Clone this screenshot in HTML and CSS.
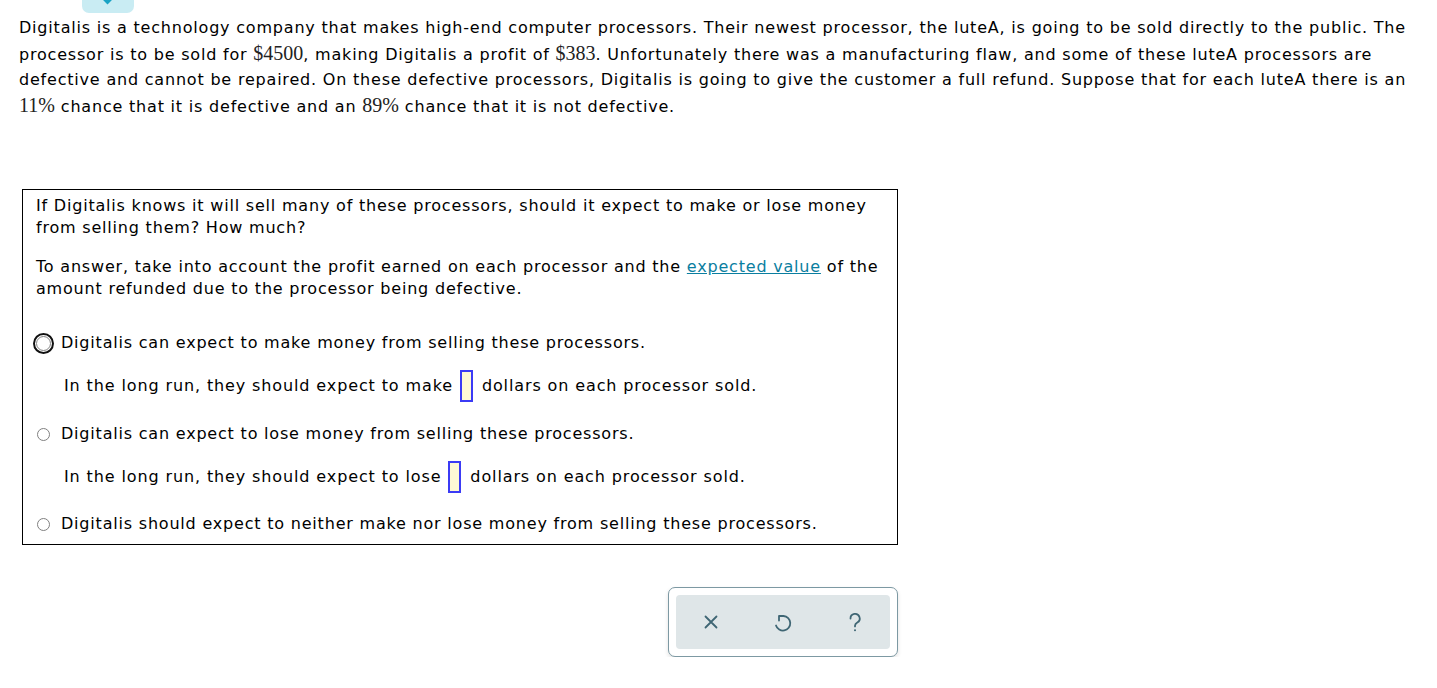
FILE: index.html
```html
<!DOCTYPE html>
<html>
<head>
<meta charset="utf-8">
<link rel="stylesheet" href="styles.css">
</head>
<body>
<div class="tab"><span class="tab-tip"></span></div>
<p class="intro">Digitalis is a technology company that makes high-end computer processors. Their newest processor, the luteA, is going to be sold directly to the public. The processor is to be sold for <span class="m">$4500</span>, making Digitalis a profit of <span class="m">$383</span>. Unfortunately there was a manufacturing flaw, and some of these luteA processors are defective and cannot be repaired. On these defective processors, Digitalis is going to give the customer a full refund. Suppose that for each luteA there is an <span class="m">11%</span> chance that it is defective and an <span class="m">89%</span> chance that it is not defective.</p>

<div class="question">
  <p class="q">If Digitalis knows it will sell many of these processors, should it expect to make or lose money from selling them? How much?</p>
  <p class="q q2">To answer, take into account the profit earned on each processor and the <a class="link" href="#">expected value</a> of the amount refunded due to the processor being defective.</p>

  <div class="opt opt1"><span class="radio focus"><span class="dot"></span></span><span>Digitalis can expect to make money from selling these processors.</span></div>
  <div class="sub sub1">In the long run, they should expect to make <span class="box"></span> dollars on each processor sold.</div>

  <div class="opt opt2"><span class="radio"></span><span>Digitalis can expect to lose money from selling these processors.</span></div>
  <div class="sub sub2">In the long run, they should expect to lose <span class="box"></span> dollars on each processor sold.</div>

  <div class="opt opt3"><span class="radio"></span><span>Digitalis should expect to neither make nor lose money from selling these processors.</span></div>
</div>

<div class="actions-row">
  <div class="actions">
    <div class="actions-inner">
      <span class="icon"><svg width="24" height="24" viewBox="0 0 24 24" fill="none" stroke="#3f6674" stroke-width="1.8" stroke-linecap="round"><path d="M6.5 6.5 L17.5 17.5 M17.5 6.5 L6.5 17.5"/></svg></span>
      <span class="icon"><svg width="24" height="24" viewBox="0 0 24 24" fill="none" stroke="#3f6674" stroke-width="1.8" stroke-linecap="round" stroke-linejoin="round"><path d="M5 15.5 A7.3 7.3 0 1 0 12.5 6 H8 M8 6 V10.5"/></svg></span>
      <span class="icon"><svg width="24" height="24" viewBox="0 0 24 24" fill="none" stroke="#3f6674" stroke-width="1.8" stroke-linecap="round"><path d="M7.5 8.5 A4.6 4.6 0 1 1 14.3 12.5 C12.8 13.4 12 14.2 12 15.8 V16.4"/><circle cx="12" cy="20.3" r="1" fill="#3f6674" stroke="none"/></svg></span>
    </div>
  </div>
</div>
</body>
</html>
```

FILE: styles.css
```css
html, body {
  margin: 0;
  padding: 0;
  background: #ffffff;
}
body {
  font-family: "DejaVu Sans", Verdana, sans-serif;
  font-size: 16px;
  color: #000;
  width: 1437px;
}
.tab {
  margin-left: 82px;
  width: 52px;
  height: 13px;
  background: #c9ecf3;
  border-radius: 0 0 7px 7px;
  position: relative;
  overflow: hidden;
}
.tab-tip {
  position: absolute;
  left: 22px;
  top: -4px;
  width: 7px;
  height: 7px;
  background: #1aa3c4;
  transform: rotate(45deg);
}
.intro {
  margin: 2px 0 0 19px;
  width: 1400px;
  line-height: 25.6px;
  letter-spacing: 0.8px;
}
.m {
  font-family: "Liberation Serif", "DejaVu Serif", serif;
  font-size: 20px;
  color: #222;
  letter-spacing: 0;
}
.question {
  margin: 70px 0 0 22px;
  border: 1px solid #000;
  padding: 5px 13px 9px 13px;
  box-sizing: content-box;
  width: 848px;
  display: flex;
  flex-direction: column;
  letter-spacing: 0.8px;
}
.q {
  margin: 0;
  line-height: 22px;
}
.q2 {
  margin-top: 17px;
}
.link {
  color: #0a7ea0;
  text-decoration: underline;
}
.opt {
  display: flex;
  align-items: center;
  height: 22px;
  line-height: 22px;
}
.opt1 { margin-top: 32px; margin-left: -2px; }
.opt2 { margin-top: 21px; margin-left: -2px; }
.opt3 { margin-top: 20px; margin-left: -2px; }
.radio {
  width: 13px;
  height: 13px;
  border: 1px solid #808080;
  border-radius: 50%;
  box-sizing: border-box;
  margin: 0 11px 0 3px;
  flex: none;
  background: #fff;
}
.radio.focus {
  width: 21px;
  height: 21px;
  border: 2px solid #111;
  margin: 0 7px 0 -1px;
  display: flex;
  align-items: center;
  justify-content: center;
}
.radio.focus .dot {
  width: 15px;
  height: 15px;
  border-radius: 50%;
  border: 1.5px solid #858585;
  box-sizing: border-box;
}
.sub {
  margin-left: 28px;
  height: 32px;
  line-height: 32px;
  display: flex;
  align-items: center;
  white-space: pre;
  letter-spacing: 0.88px;
}
.sub1 { margin-top: 16px; }
.sub2 { margin-top: 16px; }
.box {
  display: inline-block;
  width: 13px;
  height: 32px;
  box-sizing: border-box;
  border: 2px solid #3b3bf5;
  background: #fef9d5;
  margin: 0 3px 0 1px;
}
.actions-row {
  display: flex;
  width: 898px;
  justify-content: flex-end;
  margin-top: 42px;
}
.actions {
  width: 230px;
  height: 70px;
  box-sizing: border-box;
  border: 1px solid #7d99a3;
  border-radius: 7px;
  padding: 7px;
  background: #fff;
  box-shadow: 0 2px 4px rgba(0,0,0,0.12);
}
.actions-inner {
  height: 54px;
  background: #dfe6e8;
  border-radius: 4px;
  display: flex;
  align-items: center;
  padding-left: 23px;
  gap: 48px;
}
.icon {
  width: 24px;
  height: 24px;
  display: flex;
}
```
